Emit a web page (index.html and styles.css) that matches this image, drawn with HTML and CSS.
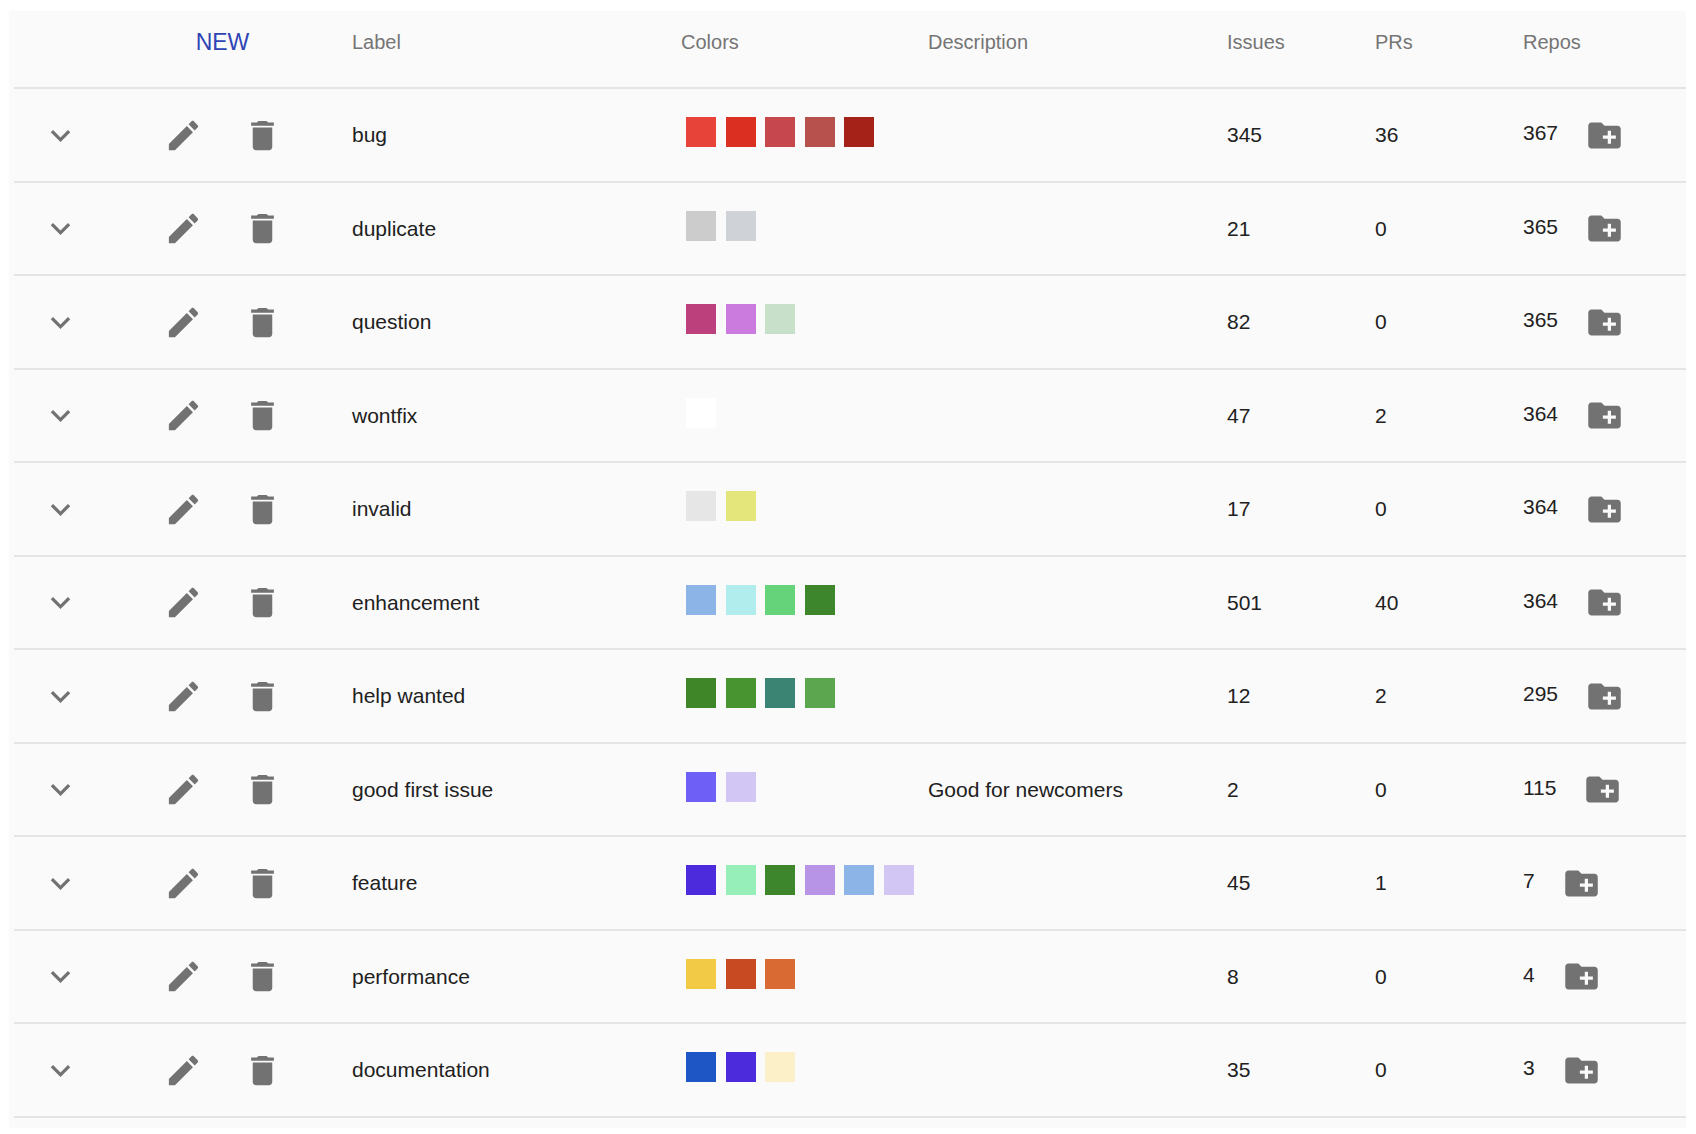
FILE: index.html
```html
<!DOCTYPE html>
<html lang="en">
<head>
<meta charset="utf-8">
<meta name="viewport" content="width=device-width, initial-scale=1">
<title>Labels</title>
<link rel="stylesheet" href="styles.css">
</head>
<body>
<svg class="sprite" aria-hidden="true">
  <symbol id="expand" viewBox="0 0 24 24"><path d="M16.59 8.59L12 13.17 7.41 8.59 6 10l6 6 6-6z"/></symbol>
  <symbol id="edit" viewBox="0 0 24 24"><path d="M3 17.25V21h3.75L17.81 9.94l-3.75-3.75L3 17.25zM20.71 7.04c.39-.39.39-1.02 0-1.41l-2.34-2.34c-.39-.39-1.02-.39-1.41 0l-1.83 1.83 3.75 3.75 1.83-1.83z"/></symbol>
  <symbol id="delete" viewBox="0 0 24 24"><path d="M6 19c0 1.1.9 2 2 2h8c1.1 0 2-.9 2-2V7H6v12zM19 4h-3.5l-1-1h-5l-1 1H5v2h14V4z"/></symbol>
  <symbol id="add" viewBox="0 0 24 24"><path d="M20 6h-8l-2-2H4c-1.11 0-1.99.89-1.99 2L2 18c0 1.11.89 2 2 2h16c1.11 0 2-.89 2-2V8c0-1.11-.89-2-2-2zm-1 8h-3v3h-2v-3h-3v-2h3V9h2v3h3v2z"/></symbol>
</svg>
<main class="panel">
<table class="labels">
  <colgroup>
    <col class="col-expand"><col class="col-actions"><col class="col-label"><col class="col-colors"><col class="col-description"><col class="col-count"><col class="col-count"><col class="col-repos">
  </colgroup>
  <thead>
    <tr>
      <th></th>
      <th class="actions-cell"><button class="new-button" type="button">NEW</button></th>
      <th scope="col">Label</th>
      <th scope="col">Colors</th>
      <th scope="col">Description</th>
      <th scope="col">Issues</th>
      <th scope="col">PRs</th>
      <th scope="col">Repos</th>
    </tr>
  </thead>
  <tbody>
    <tr>
      <td><button class="icon-button" type="button" aria-label="Expand"><svg class="icon"><use href="#expand"/></svg></button></td>
      <td class="actions-cell"><div class="actions"><button class="icon-button" type="button" aria-label="Edit"><svg class="icon"><use href="#edit"/></svg></button><button class="icon-button" type="button" aria-label="Delete"><svg class="icon"><use href="#delete"/></svg></button></div></td>
      <td>bug</td>
      <td><div class="swatches"><span class="swatch" style="background:#e84338"></span><span class="swatch" style="background:#da2f21"></span><span class="swatch" style="background:#c6474e"></span><span class="swatch" style="background:#b6514e"></span><span class="swatch" style="background:#a52218"></span></div></td>
      <td></td>
      <td>345</td>
      <td>36</td>
      <td><div class="repos"><span class="repo-count">367</span><button class="icon-button" type="button" aria-label="Add to repositories"><svg class="icon"><use href="#add"/></svg></button></div></td>
    </tr>
    <tr>
      <td><button class="icon-button" type="button" aria-label="Expand"><svg class="icon"><use href="#expand"/></svg></button></td>
      <td class="actions-cell"><div class="actions"><button class="icon-button" type="button" aria-label="Edit"><svg class="icon"><use href="#edit"/></svg></button><button class="icon-button" type="button" aria-label="Delete"><svg class="icon"><use href="#delete"/></svg></button></div></td>
      <td>duplicate</td>
      <td><div class="swatches"><span class="swatch" style="background:#cccccc"></span><span class="swatch" style="background:#cfd3d7"></span></div></td>
      <td></td>
      <td>21</td>
      <td>0</td>
      <td><div class="repos"><span class="repo-count">365</span><button class="icon-button" type="button" aria-label="Add to repositories"><svg class="icon"><use href="#add"/></svg></button></div></td>
    </tr>
    <tr>
      <td><button class="icon-button" type="button" aria-label="Expand"><svg class="icon"><use href="#expand"/></svg></button></td>
      <td class="actions-cell"><div class="actions"><button class="icon-button" type="button" aria-label="Edit"><svg class="icon"><use href="#edit"/></svg></button><button class="icon-button" type="button" aria-label="Delete"><svg class="icon"><use href="#delete"/></svg></button></div></td>
      <td>question</td>
      <td><div class="swatches"><span class="swatch" style="background:#bb407b"></span><span class="swatch" style="background:#cb7bdd"></span><span class="swatch" style="background:#c8e0c9"></span></div></td>
      <td></td>
      <td>82</td>
      <td>0</td>
      <td><div class="repos"><span class="repo-count">365</span><button class="icon-button" type="button" aria-label="Add to repositories"><svg class="icon"><use href="#add"/></svg></button></div></td>
    </tr>
    <tr>
      <td><button class="icon-button" type="button" aria-label="Expand"><svg class="icon"><use href="#expand"/></svg></button></td>
      <td class="actions-cell"><div class="actions"><button class="icon-button" type="button" aria-label="Edit"><svg class="icon"><use href="#edit"/></svg></button><button class="icon-button" type="button" aria-label="Delete"><svg class="icon"><use href="#delete"/></svg></button></div></td>
      <td>wontfix</td>
      <td><div class="swatches"><span class="swatch" style="background:#ffffff"></span></div></td>
      <td></td>
      <td>47</td>
      <td>2</td>
      <td><div class="repos"><span class="repo-count">364</span><button class="icon-button" type="button" aria-label="Add to repositories"><svg class="icon"><use href="#add"/></svg></button></div></td>
    </tr>
    <tr>
      <td><button class="icon-button" type="button" aria-label="Expand"><svg class="icon"><use href="#expand"/></svg></button></td>
      <td class="actions-cell"><div class="actions"><button class="icon-button" type="button" aria-label="Edit"><svg class="icon"><use href="#edit"/></svg></button><button class="icon-button" type="button" aria-label="Delete"><svg class="icon"><use href="#delete"/></svg></button></div></td>
      <td>invalid</td>
      <td><div class="swatches"><span class="swatch" style="background:#e6e6e6"></span><span class="swatch" style="background:#e4e67b"></span></div></td>
      <td></td>
      <td>17</td>
      <td>0</td>
      <td><div class="repos"><span class="repo-count">364</span><button class="icon-button" type="button" aria-label="Add to repositories"><svg class="icon"><use href="#add"/></svg></button></div></td>
    </tr>
    <tr>
      <td><button class="icon-button" type="button" aria-label="Expand"><svg class="icon"><use href="#expand"/></svg></button></td>
      <td class="actions-cell"><div class="actions"><button class="icon-button" type="button" aria-label="Edit"><svg class="icon"><use href="#edit"/></svg></button><button class="icon-button" type="button" aria-label="Delete"><svg class="icon"><use href="#delete"/></svg></button></div></td>
      <td>enhancement</td>
      <td><div class="swatches"><span class="swatch" style="background:#8db4e7"></span><span class="swatch" style="background:#b2edee"></span><span class="swatch" style="background:#65d37a"></span><span class="swatch" style="background:#3e862b"></span></div></td>
      <td></td>
      <td>501</td>
      <td>40</td>
      <td><div class="repos"><span class="repo-count">364</span><button class="icon-button" type="button" aria-label="Add to repositories"><svg class="icon"><use href="#add"/></svg></button></div></td>
    </tr>
    <tr>
      <td><button class="icon-button" type="button" aria-label="Expand"><svg class="icon"><use href="#expand"/></svg></button></td>
      <td class="actions-cell"><div class="actions"><button class="icon-button" type="button" aria-label="Edit"><svg class="icon"><use href="#edit"/></svg></button><button class="icon-button" type="button" aria-label="Delete"><svg class="icon"><use href="#delete"/></svg></button></div></td>
      <td>help wanted</td>
      <td><div class="swatches"><span class="swatch" style="background:#3f8628"></span><span class="swatch" style="background:#479430"></span><span class="swatch" style="background:#3b8474"></span><span class="swatch" style="background:#5ba64e"></span></div></td>
      <td></td>
      <td>12</td>
      <td>2</td>
      <td><div class="repos"><span class="repo-count">295</span><button class="icon-button" type="button" aria-label="Add to repositories"><svg class="icon"><use href="#add"/></svg></button></div></td>
    </tr>
    <tr>
      <td><button class="icon-button" type="button" aria-label="Expand"><svg class="icon"><use href="#expand"/></svg></button></td>
      <td class="actions-cell"><div class="actions"><button class="icon-button" type="button" aria-label="Edit"><svg class="icon"><use href="#edit"/></svg></button><button class="icon-button" type="button" aria-label="Delete"><svg class="icon"><use href="#delete"/></svg></button></div></td>
      <td>good first issue</td>
      <td><div class="swatches"><span class="swatch" style="background:#6e5ff6"></span><span class="swatch" style="background:#d2c6f5"></span></div></td>
      <td>Good for newcomers</td>
      <td>2</td>
      <td>0</td>
      <td><div class="repos"><span class="repo-count">115</span><button class="icon-button" type="button" aria-label="Add to repositories"><svg class="icon"><use href="#add"/></svg></button></div></td>
    </tr>
    <tr>
      <td><button class="icon-button" type="button" aria-label="Expand"><svg class="icon"><use href="#expand"/></svg></button></td>
      <td class="actions-cell"><div class="actions"><button class="icon-button" type="button" aria-label="Edit"><svg class="icon"><use href="#edit"/></svg></button><button class="icon-button" type="button" aria-label="Delete"><svg class="icon"><use href="#delete"/></svg></button></div></td>
      <td>feature</td>
      <td><div class="swatches"><span class="swatch" style="background:#4b2bdc"></span><span class="swatch" style="background:#96efb8"></span><span class="swatch" style="background:#3e862b"></span><span class="swatch" style="background:#b794e5"></span><span class="swatch" style="background:#8db4e7"></span><span class="swatch" style="background:#d2c6f5"></span></div></td>
      <td></td>
      <td>45</td>
      <td>1</td>
      <td><div class="repos"><span class="repo-count">7</span><button class="icon-button" type="button" aria-label="Add to repositories"><svg class="icon"><use href="#add"/></svg></button></div></td>
    </tr>
    <tr>
      <td><button class="icon-button" type="button" aria-label="Expand"><svg class="icon"><use href="#expand"/></svg></button></td>
      <td class="actions-cell"><div class="actions"><button class="icon-button" type="button" aria-label="Edit"><svg class="icon"><use href="#edit"/></svg></button><button class="icon-button" type="button" aria-label="Delete"><svg class="icon"><use href="#delete"/></svg></button></div></td>
      <td>performance</td>
      <td><div class="swatches"><span class="swatch" style="background:#f3ca45"></span><span class="swatch" style="background:#c84a23"></span><span class="swatch" style="background:#d96a34"></span></div></td>
      <td></td>
      <td>8</td>
      <td>0</td>
      <td><div class="repos"><span class="repo-count">4</span><button class="icon-button" type="button" aria-label="Add to repositories"><svg class="icon"><use href="#add"/></svg></button></div></td>
    </tr>
    <tr>
      <td><button class="icon-button" type="button" aria-label="Expand"><svg class="icon"><use href="#expand"/></svg></button></td>
      <td class="actions-cell"><div class="actions"><button class="icon-button" type="button" aria-label="Edit"><svg class="icon"><use href="#edit"/></svg></button><button class="icon-button" type="button" aria-label="Delete"><svg class="icon"><use href="#delete"/></svg></button></div></td>
      <td>documentation</td>
      <td><div class="swatches"><span class="swatch" style="background:#1e56c5"></span><span class="swatch" style="background:#4b2bdc"></span><span class="swatch" style="background:#fbf0c7"></span></div></td>
      <td></td>
      <td>35</td>
      <td>0</td>
      <td><div class="repos"><span class="repo-count">3</span><button class="icon-button" type="button" aria-label="Add to repositories"><svg class="icon"><use href="#add"/></svg></button></div></td>
    </tr>
  </tbody>
</table>
</main>
</body>
</html>
```
FILE: styles.css
```css
* {
  box-sizing: border-box;
}

body {
  margin: 0;
  padding: 11px 10px 5px 9px;
  background: #fff;
  color: #212121;
  font-family: "Liberation Sans", Arial, sans-serif;
  font-size: 21px;
  line-height: 24px;
}

.sprite {
  display: none;
}

.panel {
  padding: 0 0 10px 5px;
  background: #fafafa;
}

.labels {
  width: 100%;
  table-layout: fixed;
  border-collapse: separate;
  border-spacing: 0;
}

.col-expand { width: 92px; }
.col-actions { width: 246px; }
.col-label { width: 329px; }
.col-colors { width: 247px; }
.col-count { width: 148px; }
.col-repos { width: 163px; }

th,
td {
  padding: 0;
  border-bottom: 2px solid #e5e5e5;
  text-align: left;
  vertical-align: middle;
}

th {
  height: 78px;
  padding-bottom: 14px;
  color: #757575;
  font-size: 20px;
  font-weight: 400;
}

td {
  height: 94px;
}

tbody tr:nth-child(even) td {
  height: 93px;
}

.actions-cell {
  padding-right: 13px;
  text-align: center;
}

.actions {
  display: flex;
  justify-content: center;
}

button {
  padding: 0;
  border: 0;
  background: none;
  font: inherit;
  cursor: pointer;
}

.new-button {
  color: #2f45b5;
  font-size: 23px;
}

.icon-button {
  display: flex;
  align-items: center;
  justify-content: center;
  flex: none;
  width: 79px;
  height: 79px;
  color: #727272;
}

td > .icon-button {
  margin: 0 auto;
}

.icon {
  width: 39px;
  height: 39px;
  fill: currentColor;
}

.swatches {
  display: grid;
  grid-template-columns: repeat(6, 1fr);
  width: 237px;
  margin: 0 0 6px 5px;
}

.swatch {
  width: 30px;
  height: 30px;
}

.repos {
  display: flex;
  align-items: center;
  gap: 7px;
}

.repo-count {
  padding-bottom: 4px;
}
```
